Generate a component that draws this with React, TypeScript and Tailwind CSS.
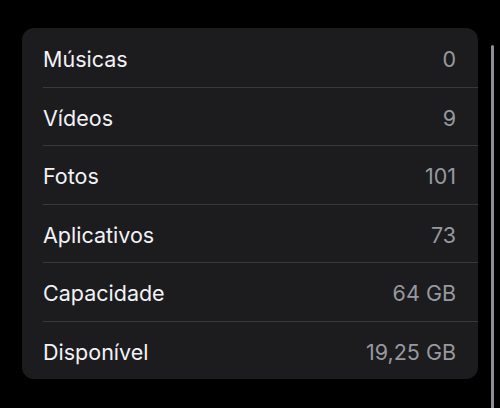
const rows = [
  { label: 'Músicas', value: '0' },
  { label: 'Vídeos', value: '9' },
  { label: 'Fotos', value: '101' },
  { label: 'Aplicativos', value: '73' },
  { label: 'Capacidade', value: '64 GB' },
  { label: 'Disponível', value: '19,25 GB' },
];

export default function App() {
  return (
    <div
      className="relative h-[408px] w-[500px] overflow-hidden bg-black pt-[28px] pl-[22px]"
      style={{ fontFamily: 'Inter, "Noto Sans", sans-serif' }}
    >
      {/* Settings list card */}
      <div className="w-[456px] overflow-hidden rounded-[12px] bg-[#1c1c1e]">
        {rows.map((row, i) => (
          <div key={row.label} className="flex h-[58.5px] items-stretch pl-[21px]">
            <div
              className={`flex flex-1 items-center justify-between pt-[3px] pr-[22px] ${
                i > 0 ? 'border-t border-[#38383a]' : ''
              }`}
            >
              <span className="text-[21.5px] text-[#f2f2f7]">{row.label}</span>
              <span className="text-[21.5px] text-[#98989f]">{row.value}</span>
            </div>
          </div>
        ))}
      </div>

      {/* scroll indicator */}
      <div className="absolute top-[45px] left-[491px] h-[380px] w-[3px] rounded-full bg-[#8e8e93]" />
    </div>
  );
}
